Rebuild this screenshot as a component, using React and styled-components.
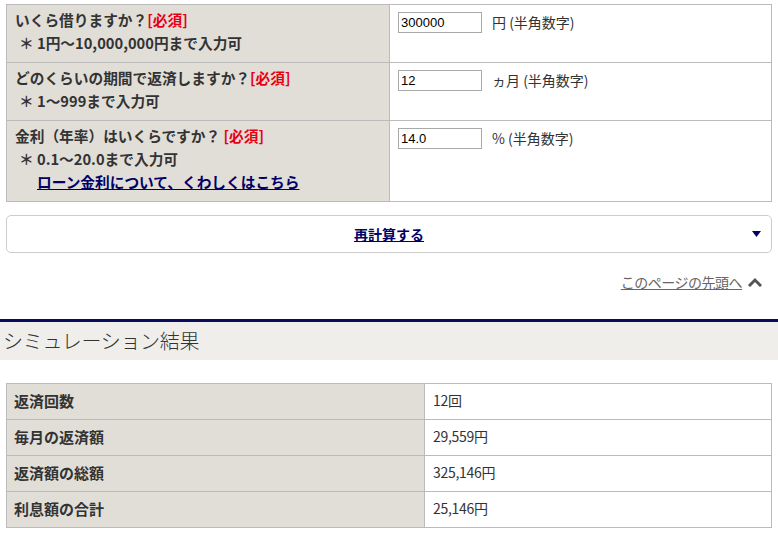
import React from "react";
import styled, { createGlobalStyle } from "styled-components";

const Global = createGlobalStyle`
  html, body { margin: 0; padding: 0; background: #fff; }
  body {
    font-family: "Noto Sans CJK JP", "Noto Sans", sans-serif;
    color: #333;
    font-size: 14px;
  }
`;

const Page = styled.div`
  width: 778px;
  padding-top: 4px;
`;

const Section = styled.div`
  padding: 0 6px;
`;

const Table = styled.table`
  width: 100%;
  border-collapse: collapse;
  table-layout: fixed;
  border: 1px solid #bbb;
`;

const LabelCell = styled.th`
  width: ${(p) => p.$w}px;
  background: #e1ded8;
  border: 1px solid #bbb;
  text-align: left;
  vertical-align: top;
  font-weight: bold;
  font-size: 14.7px;
  line-height: 23px;
  padding: 3px 8px 8px;
  color: #333;
  box-sizing: border-box;
  height: ${(p) => p.$h}px;
`;

const ValueCell = styled.td`
  border: 1px solid #bbb;
  vertical-align: top;
  padding: 6px 8px;
  font-size: 14px;
  line-height: 23px;
  color: #333;
  box-sizing: border-box;
`;

const Required = styled.span`
  color: #e60012;
`;

const Note = styled.div`
  display: flex;
  padding-left: 4px;
`;

const Mark = styled.span`
  display: inline-block;
  width: 18px;
`;

const DetailLink = styled.a`
  display: inline-block;
  margin-left: 22px;
  color: #000066;
  text-decoration: underline;
  cursor: pointer;
`;

const InputRow = styled.div`
  display: flex;
  align-items: center;
  gap: 10px;
`;

const NumInput = styled.input`
  width: 84px;
  height: 21px;
  box-sizing: border-box;
  border: 1px solid #a9a9a9;
  padding: 1px 2px;
  font-family: "Liberation Sans", Arial, sans-serif;
  font-size: 13px;
  color: #000;
  outline: none;
`;

const Unit = styled.span`
  font-size: 14px;
  color: #333;
`;

const RecalcButton = styled.button`
  position: relative;
  display: flex;
  align-items: center;
  justify-content: center;
  width: 100%;
  height: 38px;
  margin-top: 13px;
  background: #fff;
  border: 1px solid #ccc;
  border-radius: 5px;
  font-family: "Noto Sans CJK JP", sans-serif;
  font-size: 14px;
  font-weight: bold;
  color: #000066;
  text-decoration: underline;
  cursor: pointer;
  padding: 0;
`;

const Caret = styled.svg`
  position: absolute;
  right: 10px;
  top: 50%;
  margin-top: -3px;
`;

const TopLinkRow = styled.div`
  display: flex;
  justify-content: flex-end;
  align-items: center;
  gap: 6px;
  height: 20px;
  margin-top: 19px;
  padding-right: 10px;
`;

const TopLink = styled.a`
  color: #666;
  font-size: 14px;
  text-decoration: underline;
  letter-spacing: -0.5px;
  cursor: pointer;
`;

const Heading = styled.h2`
  margin: 27px 0 0;
  border-top: 3px solid #0b0b5c;
  background: #efeeeb;
  height: 38px;
  padding-left: 3px;
  font-size: 20px;
  font-weight: 300;
  line-height: 38px;
  color: #333;
  letter-spacing: -0.3px;
`;

const ResultSection = styled(Section)`
  margin-top: 23px;
`;

const ResultLabel = styled.th`
  width: 418px;
  height: 36px;
  box-sizing: border-box;
  background: #e1ded8;
  border: 1px solid #bbb;
  text-align: left;
  font-weight: bold;
  font-size: 15px;
  padding: 0 7px 3px;
  color: #333;
`;

const ResultValue = styled.td`
  border: 1px solid #bbb;
  padding: 0 8px 3px;
  font-size: 14px;
  color: #333;
  letter-spacing: -0.3px;
`;

const questions = [
  {
    q: "いくら借りますか？",
    space: "",
    note: "1円〜10,000,000円まで入力可",
    value: "300000",
    unit: "円 (半角数字)",
    h: 58,
  },
  {
    q: "どのくらいの期間で返済しますか？",
    space: "",
    note: "1〜999まで入力可",
    value: "12",
    unit: "ヵ月 (半角数字)",
    h: 58,
  },
  {
    q: "金利（年率）はいくらですか？",
    space: " ",
    note: "0.1〜20.0まで入力可",
    value: "14.0",
    unit: "% (半角数字)",
    link: "ローン金利について、くわしくはこちら",
    h: 80,
  },
];

const results = [
  ["返済回数", "12回"],
  ["毎月の返済額", "29,559円"],
  ["返済額の総額", "325,146円"],
  ["利息額の合計", "25,146円"],
];

export default function App() {
  return (
    <Page>
      <Global />
      <Section>
        <Table>
          <tbody>
            {questions.map((r) => (
              <tr key={r.q}>
                <LabelCell $w={383} $h={r.h}>
                  <div>
                    {r.q}
                    {r.space}
                    <Required>[必須]</Required>
                  </div>
                  <Note>
                    <Mark>＊</Mark>
                    <span>{r.note}</span>
                  </Note>
                  {r.link && <DetailLink>{r.link}</DetailLink>}
                </LabelCell>
                <ValueCell>
                  <InputRow>
                    <NumInput defaultValue={r.value} />
                    <Unit>{r.unit}</Unit>
                  </InputRow>
                </ValueCell>
              </tr>
            ))}
          </tbody>
        </Table>
        <RecalcButton type="button">
          再計算する
          <Caret width="9" height="6" viewBox="0 0 9 6">
            <polygon points="0,0 9,0 4.5,6" fill="#000066" />
          </Caret>
        </RecalcButton>
        <TopLinkRow>
          <TopLink>このページの先頭へ</TopLink>
          <svg width="14" height="10" viewBox="0 0 14 10">
            <polyline
              points="2,8 7,3 12,8"
              fill="none"
              stroke="#555"
              strokeWidth="3"
              strokeLinecap="square"
            />
          </svg>
        </TopLinkRow>
      </Section>
      <Heading>シミュレーション結果</Heading>
      <ResultSection>
        <Table>
          <tbody>
            {results.map(([k, v]) => (
              <tr key={k}>
                <ResultLabel>{k}</ResultLabel>
                <ResultValue>{v}</ResultValue>
              </tr>
            ))}
          </tbody>
        </Table>
      </ResultSection>
    </Page>
  );
}
